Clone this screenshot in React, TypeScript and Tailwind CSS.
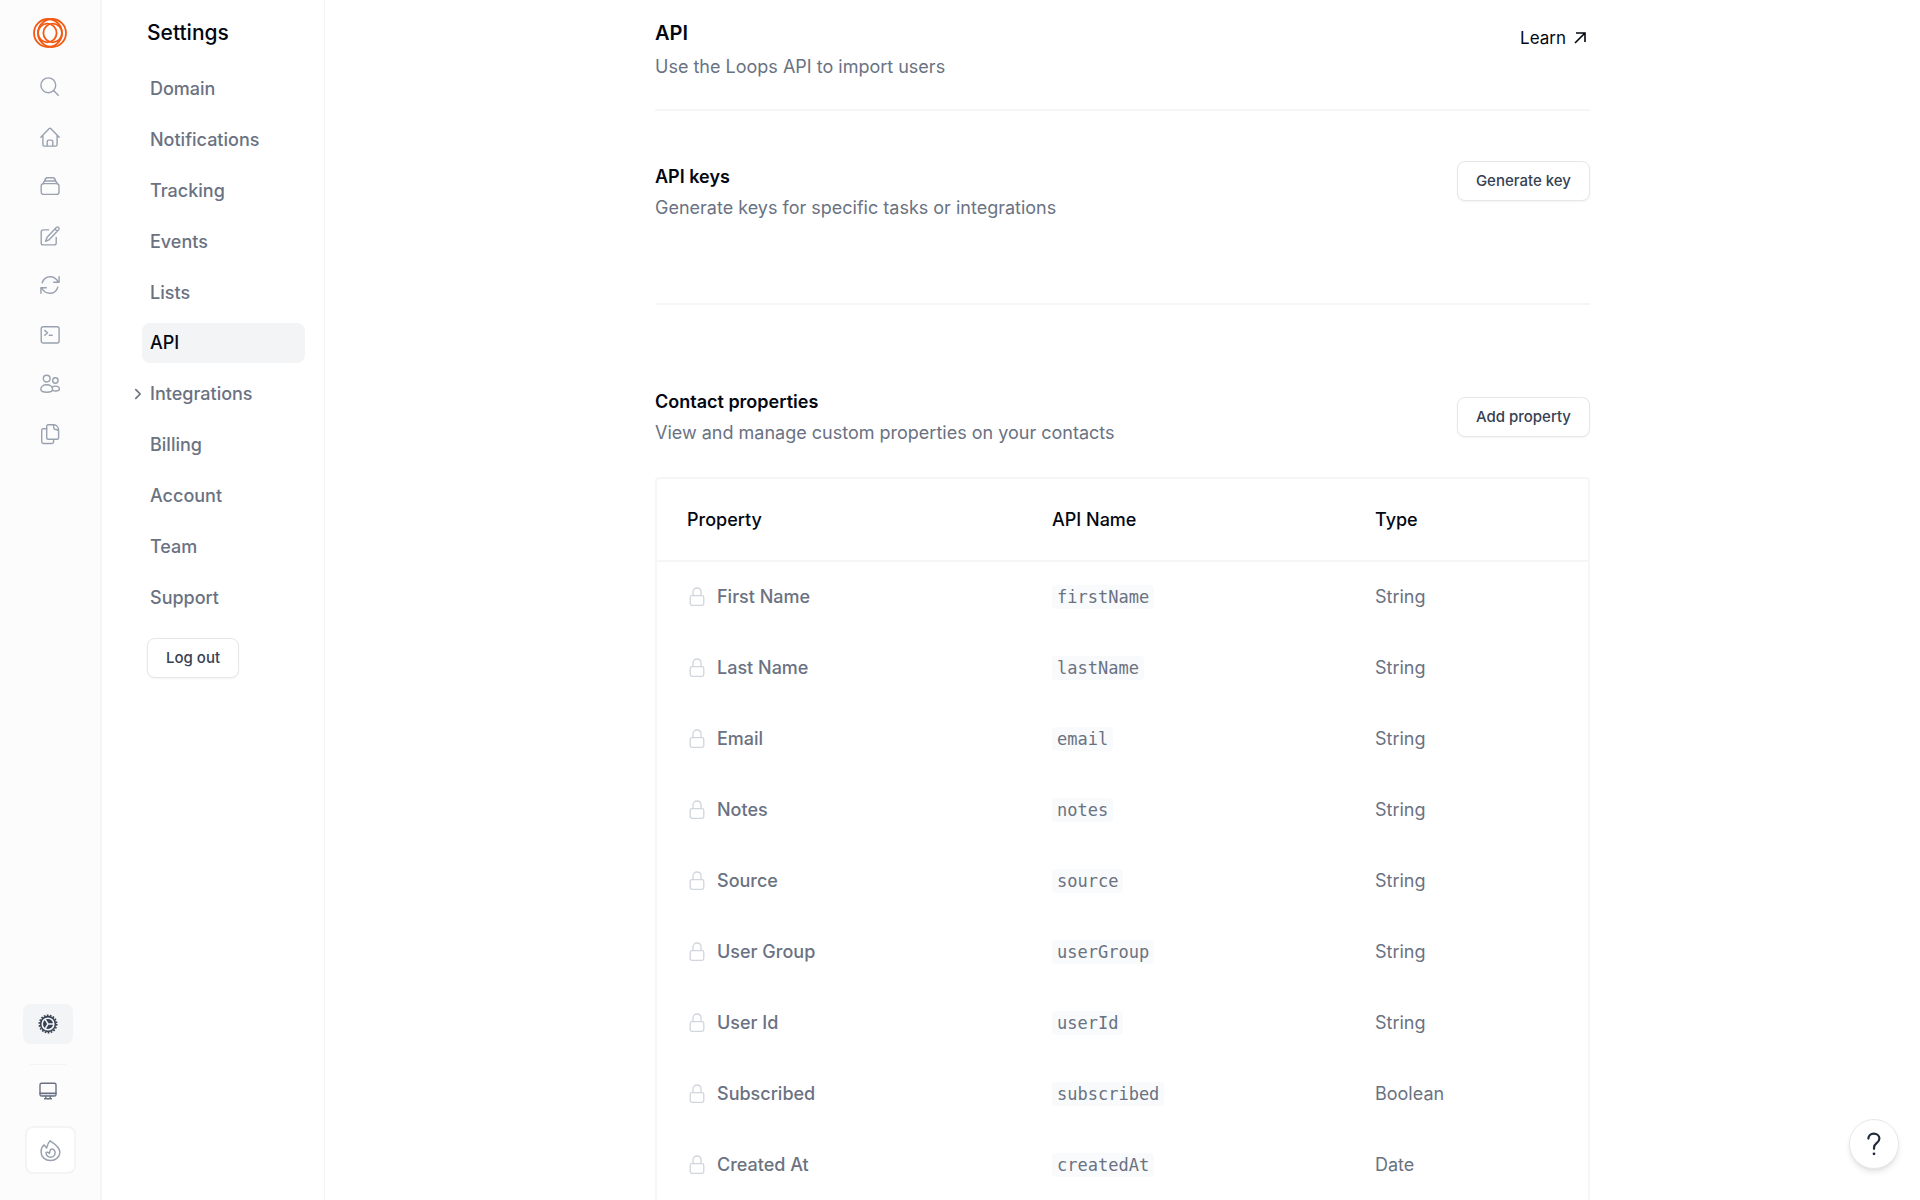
import type { ReactNode } from "react";

const NAV_ITEMS = [
  "Domain",
  "Notifications",
  "Tracking",
  "Events",
  "Lists",
  "API",
  "Integrations",
  "Billing",
  "Account",
  "Team",
  "Support",
];

type Property = { name: string; apiName: string; type: string };

const PROPERTIES: Property[] = [
  { name: "First Name", apiName: "firstName", type: "String" },
  { name: "Last Name", apiName: "lastName", type: "String" },
  { name: "Email", apiName: "email", type: "String" },
  { name: "Notes", apiName: "notes", type: "String" },
  { name: "Source", apiName: "source", type: "String" },
  { name: "User Group", apiName: "userGroup", type: "String" },
  { name: "User Id", apiName: "userId", type: "String" },
  { name: "Subscribed", apiName: "subscribed", type: "Boolean" },
  { name: "Created At", apiName: "createdAt", type: "Date" },
];

function Icon({ children, className = "size-5" }: { children: ReactNode; className?: string }) {
  return (
    <svg
      viewBox="0 0 20 20"
      fill="none"
      stroke="currentColor"
      strokeWidth="1.4"
      strokeLinecap="round"
      strokeLinejoin="round"
      className={`shrink-0 overflow-visible ${className}`}
      aria-hidden
    >
      {children}
    </svg>
  );
}

function Logo() {
  return (
    <svg viewBox="0 0 34 30" fill="none" stroke="#f25a12" strokeWidth="1.8" className="h-[30px] w-[34px]" aria-hidden>
      <circle cx="15" cy="15" r="14" />
      <circle cx="19" cy="15" r="14" />
      <circle cx="14.3" cy="15" r="9.3" />
      <circle cx="19.7" cy="15" r="9.3" />
    </svg>
  );
}

const RAIL_ICONS: { label: string; icon: ReactNode }[] = [
  {
    label: "Search",
    icon: (
      <>
        <circle cx="8.3" cy="8.3" r="7.4" />
        <path d="M13.7 13.7l4.6 4.6" />
      </>
    ),
  },
  {
    label: "Home",
    icon: (
      <path d="M.8 10.2L9.3 1.5a1 1 0 0 1 1.4 0l8.5 8.7M2.9 8.2v9.6c0 .8.5 1.3 1.3 1.3h11.6c.8 0 1.3-.5 1.3-1.3V8.2M7.2 19v-4.6c0-.8.5-1.3 1.3-1.3h3c.8 0 1.3.5 1.3 1.3V19" />
    ),
  },
  {
    label: "Campaigns",
    icon: (
      <>
        <rect x="1.2" y="7.6" width="17.8" height="10.8" rx="2.4" />
        <path d="M3.2 7.7C3.5 6 4.2 5 5.6 5h9c1.4 0 2.1 1 2.4 2.700M4.6 5.3c.3-2 1.1-3.6 2.7-3.6h5.6c1.6 0 2.4 1.600 2.7 3.600" />
      </>
    ),
  },
  {
    label: "Compose",
    icon: (
      <>
        <path d="M8.6 3.900H3.200c-1.200 0-2 .8-2 2v11c0 1.200.8 2 2 2h11c1.200 0 2-.8 2-2v-5.400" />
        <path d="M16.300 1.400a1.700 1.700 0 0 1 2.400 2.400L9.300 13.600l-3.700 1.700 1.500-4zM14.900 2.900l2.400 2.400" />
      </>
    ),
  },
  {
    label: "Loops",
    icon: (
      <path d="M2.200 7.800C3.300 4.300 6.400 1.700 10 1.700c3.600 0 6.700 2.200 8.200 5.300M19.100 1.800v5.500h-5.400M17.800 12.200c-1.100 3.500-4.200 6.100-7.800 6.100-3.600 0-6.700-2.200-8.200-5.300M.9 18.200v-5.500h5.400" />
    ),
  },
  {
    label: "Transactional",
    icon: (
      <>
        <rect x="1.2" y="1.8" width="17.9" height="16.2" rx="2" />
        <path d="M4.700 5.400l2.900 2.400-2.900 2.400M9.200 10.300h3" />
      </>
    ),
  },
  {
    label: "Audience",
    icon: (
      <>
        <circle cx="6.7" cy="4.6" r="3.4" />
        <circle cx="15.4" cy="6.5" r="2.7" />
        <path d="M.8 15.300c0-2.500 2.500-4.500 5.900-4.500s5.900 2 5.900 4.500c0 2-2.500 2.900-5.900 2.900S.8 17.300.8 15.300z" />
        <path d="M12.200 13.200c.8-.7 2-1.100 3.200-1.100 2.300 0 4 1.400 4 3 0 1.300-1.500 1.900-4 1.900-1 0-2-.1-2.900-.4" />
      </>
    ),
  },
  {
    label: "Forms",
    icon: (
      <>
        <path d="M6.700 4.700H3.400c-1 0-1.700.7-1.700 1.700v11.400c0 1 .7 1.700 1.700 1.700h8.500c1 0 1.700-.7 1.700-1.700v-2" />
        <path d="M13.800.8H8.200c-.9 0-1.500.6-1.500 1.500v11.500c0 .9.6 1.500 1.500 1.500h8.900c.9 0 1.500-.6 1.500-1.500V6.200c0-2.900-1.900-5.400-4.800-5.400zM12.900.8c.8.6.9 1.600.9 3 0 1 .5 1.700 1.600 1.700 1.400 0 2.600.3 3.100 1.100" />
      </>
    ),
  },
];

function GearIcon() {
  return (
    <Icon>
      <circle cx="10" cy="10" r="8.7" strokeWidth="1.6" strokeDasharray="1.7 1.34" strokeLinecap="butt" />
      <circle cx="10" cy="10" r="7.4" strokeWidth="1.6" />
      <circle cx="10" cy="10" r="5" fill="currentColor" stroke="none" />
      <path d="M10 10h5.5M10 10L7.200 5.300M10 10l-2.800 4.700" stroke="#f3f4f6" strokeWidth="1.5" />
    </Icon>
  );
}

function LockIcon() {
  return (
    <svg viewBox="0 0 16 20" fill="none" stroke="currentColor" strokeWidth="1.3" className="h-5 w-4 shrink-0" aria-hidden>
      <rect x="1.2" y="8.6" width="13.6" height="9.8" rx="1.8" />
      <path d="M4 8.600V4.900C4 2.700 5.700 1 8 1s4 1.700 4 3.900v3.700" />
    </svg>
  );
}

function OutlineButton({ children }: { children: ReactNode }) {
  return (
    <button
      type="button"
      className="h-10 shrink-0 rounded-lg border border-gray-200 bg-white px-[18px] text-[15px] font-medium text-gray-700 shadow-xs"
    >
      {children}
    </button>
  );
}

function SectionHeader({ title, description, children }: { title: string; description: string; children: ReactNode }) {
  return (
    <div className="flex justify-between">
      <div>
        <h2 className="text-lg leading-[31px] font-semibold text-gray-950">{title}</h2>
        <p className="text-lg leading-[31px] text-gray-500">{description}</p>
      </div>
      {children}
    </div>
  );
}

function IconRail() {
  return (
    <nav aria-label="Main" className="flex w-[102px] shrink-0 flex-col items-center border-r-2 border-gray-100/70 bg-[#fcfcfd] text-gray-400">
      <a href="#" aria-label="Loops" className="mt-[18px]">
        <Logo />
      </a>
      <div className="mt-[19px] flex h-[387px] flex-col justify-between">
        {RAIL_ICONS.map(({ label, icon }) => (
          <a key={label} href="#" aria-label={label} className="flex size-10 items-center justify-center">
            <Icon>{icon}</Icon>
          </a>
        ))}
      </div>
      <div className="mt-auto mb-[26px] flex flex-col items-center">
        <a href="#" aria-label="Settings" className="mr-1 flex h-10 w-[50px] items-center justify-center rounded-lg bg-gray-100 text-gray-700">
          <GearIcon />
        </a>
        <hr className="mt-5 mr-1 w-9 border-gray-100" />
        <a href="#" aria-label="Appearance" className="mt-3 mr-1 flex h-7 w-10 items-center justify-center text-gray-500">
          <Icon>
            <path d="M2.500 12.600h15v2.500h-15z" fill="#ddd9ee" stroke="none" />
            <rect x="2" y="2.200" width="16" height="12.800" rx="1.600" />
            <path d="M2 12.300h16M7.800 15.200v2.200M12.200 15.200v2.200M6.600 17.800h6.800" />
          </Icon>
        </a>
        <button type="button" aria-label="What's new" className="mt-[21px] flex h-12 w-[51px] items-center justify-center rounded-lg border-2 border-gray-100 bg-white">
          <Icon className="size-[21px]">
            <path d="M9.600.8c3.300 2.200 9.300 5.500 9.300 10.800 0 4.500-3.900 7.900-8.900 7.900s-9-3.300-9-8c0-2.700 1.100-5.200 3-6.800l2.300 3C7 5.500 7.700 2.700 9.600.8z" />
            <path d="M10 9.200c2.200-1.500 4.400.4 4.400 3 0 2.500-2 4.200-4.300 4.200-2.400 0-4.300-1.600-4.300-4.600 1.500-.5 2.600 0 3.100 1.100.6-1.200.4-2.600 1.100-3.700z" />
          </Icon>
        </button>
      </div>
    </nav>
  );
}

function SettingsNav() {
  return (
    <aside className="w-[223px] shrink-0 border-r border-gray-100 pt-[18px]">
      <h2 className="pl-[45px] text-[21px] leading-[30px] font-medium text-gray-950">Settings</h2>
      <nav aria-label="Settings" className="mt-[21px] mr-[19px] ml-10 flex h-[549px] flex-col justify-between">
        {NAV_ITEMS.map((item) => {
          const active = item === "API";
          return (
            <a
              key={item}
              href="#"
              aria-current={active ? "page" : undefined}
              className={`relative flex h-10 items-center rounded-lg px-2 text-lg font-medium ${active ? "bg-gray-100 text-gray-950" : "text-gray-500"}`}
            >
              {item === "Integrations" && (
                <Icon className="absolute -left-[14px] size-5">
                  <path d="M7.800 5.600l4.400 4.400-4.400 4.400" strokeWidth="1.7" />
                </Icon>
              )}
              {item}
            </a>
          );
        })}
      </nav>
      <div className="mt-5 ml-[45px]">
        <OutlineButton>Log out</OutlineButton>
      </div>
    </aside>
  );
}

function PropertiesTable({ rows }: { rows: Property[] }) {
  return (
    <div className="mt-[29px] rounded-t border-2 border-b-0 border-gray-100/80">
      <table className="w-full table-fixed text-left text-lg">
        <thead>
          <tr className="h-[82px] border-b-2 border-gray-100/80 text-gray-950">
            <th className="w-[395px] pl-[30px] font-medium">Property</th>
            <th className="w-[323px] font-medium">API Name</th>
            <th className="font-medium">Type</th>
          </tr>
        </thead>
        <tbody className="text-gray-500">
          {rows.map((row) => (
            <tr key={row.apiName} className="h-[71px]">
              <td className="pl-8 font-medium">
                <span className="flex items-center gap-3">
                  <span className="text-gray-300">
                    <LockIcon />
                  </span>
                  {row.name}
                </span>
              </td>
              <td>
                <code className="inline-block rounded bg-gray-50 px-[5px] font-['DejaVu_Sans_Mono',monospace] text-[17px] leading-6">{row.apiName}</code>
              </td>
              <td>{row.type}</td>
            </tr>
          ))}
        </tbody>
      </table>
    </div>
  );
}

export default function App() {
  return (
    <div className="flex h-screen overflow-hidden bg-white font-['Inter',sans-serif]">
      <IconRail />
      <SettingsNav />
      <main className="min-w-0 flex-1">
        <div className="mx-auto max-w-[935px]">
          <header className="flex items-start justify-between border-b-2 border-gray-100/80 pt-[18px] pb-[27px]">
            <div className="flex flex-col gap-0.5">
              <h1 className="text-xl leading-[31px] font-semibold text-gray-950">API</h1>
              <p className="text-lg leading-[31px] text-gray-500">Use the Loops API to import users</p>
            </div>
            <a href="#" className="mt-2 mr-1 flex items-center gap-2 text-[17px] leading-6 text-gray-950">
              Learn
              <svg viewBox="0 0 12 12" fill="none" stroke="currentColor" strokeWidth="1.6" className="size-3" aria-hidden>
                <path d="M1 11L11 1M2 1h9v9" />
              </svg>
            </a>
          </header>
          <section className="border-b-2 border-gray-100/80 pt-[50px] pb-20">
            <SectionHeader title="API keys" description="Generate keys for specific tasks or integrations">
              <OutlineButton>Generate key</OutlineButton>
            </SectionHeader>
          </section>
          <section className="pt-[81px]">
            <SectionHeader title="Contact properties" description="View and manage custom properties on your contacts">
              <div className="self-center">
                <OutlineButton>Add property</OutlineButton>
              </div>
            </SectionHeader>
            <PropertiesTable rows={PROPERTIES} />
          </section>
        </div>
      </main>
      <button
        type="button"
        aria-label="Help"
        className="fixed right-[21px] bottom-[31px] flex size-[50px] items-center justify-center rounded-full border border-gray-200 bg-white text-gray-800 shadow-md"
      >
        <svg viewBox="0 0 14 24" fill="none" stroke="currentColor" strokeWidth="2.2" strokeLinecap="round" className="h-6 w-3.5" aria-hidden>
          <path d="M1.400 6.600C1.400 3.700 3.700 1.600 6.800 1.600s5.600 2 5.600 4.900c0 2.300-1.100 3.400-2.800 4.700-1.700 1.300-2.600 2.400-2.600 4.600v1" />
          <circle cx="7" cy="21.800" r="1.400" fill="currentColor" stroke="none" />
        </svg>
      </button>
    </div>
  );
}
